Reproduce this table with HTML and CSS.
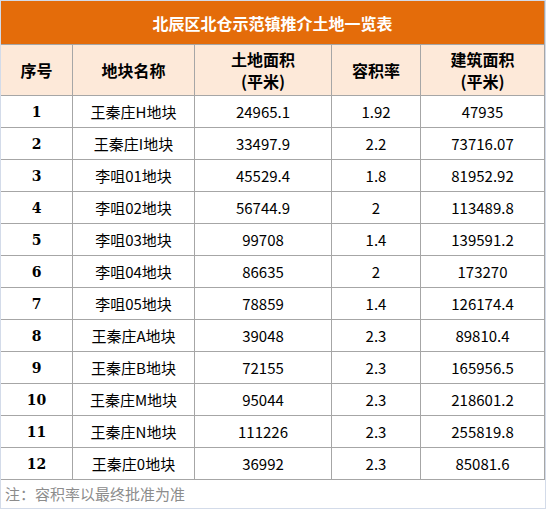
FILE: index.html
```html
<!DOCTYPE html>
<html lang="zh-CN">
<head>
  <meta charset="UTF-8" />
  <meta name="viewport" content="width=device-width, initial-scale=1.0"/>
  <title>北辰区北仓示范镇推介土地一览表</title>
  <link rel="stylesheet" href="styles.css">
</head>
<body>

<div class="frame">
  <table class="land">
    <colgroup>
      <col class="c-id">
      <col class="c-name">
      <col class="c-area">
      <col class="c-ratio">
      <col class="c-build">
    </colgroup>
    <thead>
      <tr>
        <th class="title" colspan="5">北辰区北仓示范镇推介土地一览表</th>
      </tr>
      <tr class="head">
        <th>序号</th>
        <th>地块名称</th>
        <th>土地面积<br>(平米)</th>
        <th>容积率</th>
        <th>建筑面积<br>(平米)</th>
      </tr>
    </thead>
    <tbody>
      <tr><td class="id">1</td><td>王秦庄H地块</td><td>24965.1</td><td>1.92</td><td>47935</td></tr>
      <tr><td class="id">2</td><td>王秦庄I地块</td><td>33497.9</td><td>2.2</td><td>73716.07</td></tr>
      <tr><td class="id">3</td><td>李咀01地块</td><td>45529.4</td><td>1.8</td><td>81952.92</td></tr>
      <tr><td class="id">4</td><td>李咀02地块</td><td>56744.9</td><td>2</td><td>113489.8</td></tr>
      <tr><td class="id">5</td><td>李咀03地块</td><td>99708</td><td>1.4</td><td>139591.2</td></tr>
      <tr><td class="id">6</td><td>李咀04地块</td><td>86635</td><td>2</td><td>173270</td></tr>
      <tr><td class="id">7</td><td>李咀05地块</td><td>78859</td><td>1.4</td><td>126174.4</td></tr>
      <tr><td class="id">8</td><td>王秦庄A地块</td><td>39048</td><td>2.3</td><td>89810.4</td></tr>
      <tr><td class="id">9</td><td>王秦庄B地块</td><td>72155</td><td>2.3</td><td>165956.5</td></tr>
      <tr><td class="id">10</td><td>王秦庄M地块</td><td>95044</td><td>2.3</td><td>218601.2</td></tr>
      <tr><td class="id">11</td><td>王秦庄N地块</td><td>111226</td><td>2.3</td><td>255819.8</td></tr>
      <tr><td class="id">12</td><td>王秦庄0地块</td><td>36992</td><td>2.3</td><td>85081.6</td></tr>
    </tbody>
  </table>

  <p class="note">注：容积率以最终批准为准</p>
</div>

</body>
</html>
```

FILE: styles.css
```css
:root {
  --laranja: #e46c0a;
  --pessego: #fde9d9;
  --linha: #a6a6a6;
  --moldura: #d3dbe9;
}

body {
  margin: 0;
  padding: 0;
  background-color: #fff;
  font-family: "Noto Sans CJK SC", "Noto Sans", sans-serif;
  color: #000;
}

.frame {
  width: 544px;
  height: 507px;
  border: 1px solid var(--moldura);
}

.land {
  width: 544px;
  table-layout: fixed;
  border-collapse: separate;
  border-spacing: 0;
}

.c-id { width: 72px; }
.c-name { width: 122px; }
.c-area { width: 137px; }
.c-ratio { width: 89px; }
.c-build { width: 124px; }

.land th,
.land td {
  box-sizing: border-box;
  padding: 0;
  text-align: center;
  border-right: 1px solid var(--linha);
  border-bottom: 1px solid var(--linha);
}

.land .title {
  height: 44px;
  background-color: var(--laranja);
  color: #fff;
  font-size: 16px;
  font-weight: bold;
  line-height: 20px;
}

.head th {
  height: 51px;
  background-color: var(--pessego);
  font-size: 16px;
  font-weight: bold;
  line-height: 22px;
}

.land td {
  height: 32px;
  font-size: 15px;
  line-height: 20px;
}

.land td.id {
  font-family: "DejaVu Serif", "Liberation Serif", serif;
  font-weight: bold;
  font-size: 14px;
}

.note {
  margin: 0;
  padding: 0 0 0 4px;
  height: 28px;
  line-height: 28px;
  font-size: 15px;
  color: #8c8c8c;
}
```
